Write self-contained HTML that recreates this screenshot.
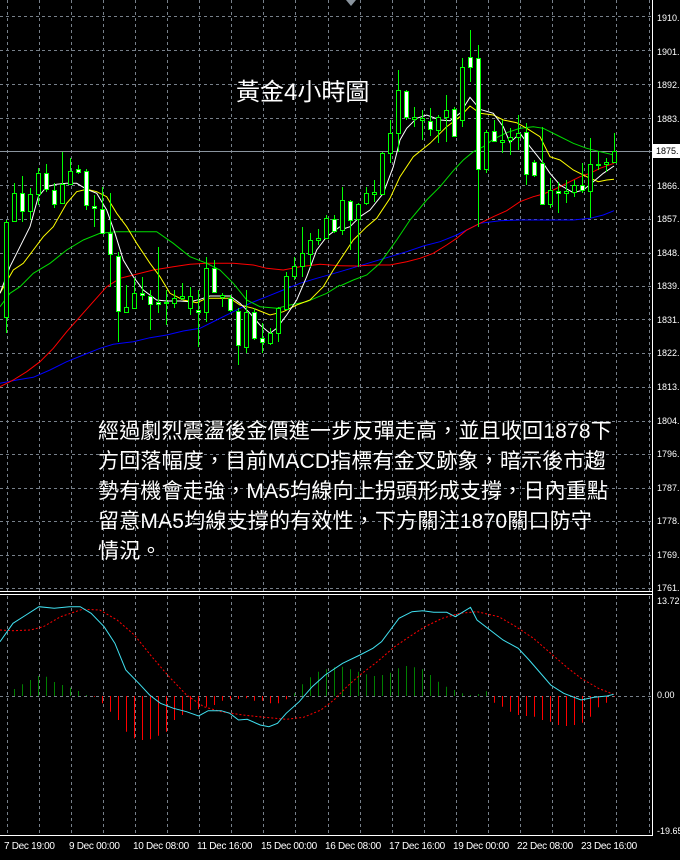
<!DOCTYPE html>
<html><head><meta charset="utf-8">
<style>
html,body{margin:0;padding:0;background:#000;}
#wrap{position:relative;width:680px;height:860px;overflow:hidden;background:#000;font-family:"Liberation Sans",sans-serif;}
svg{position:absolute;left:0;top:0;}
.lbl{position:absolute;left:657px;font-size:9px;color:#fff;line-height:10px;font-family:"Liberation Sans",sans-serif;}
.date{position:absolute;top:841px;font-size:10px;color:#fff;white-space:nowrap;letter-spacing:-0.3px;}
#title{position:absolute;left:236px;top:72px;font-size:24px;color:#fff;font-family:"Liberation Sans","Noto Sans CJK TC",sans-serif;white-space:nowrap;}
#para{position:absolute;left:98px;top:417px;font-size:21px;line-height:30px;color:#fff;font-family:"Liberation Sans","Noto Sans CJK TC",sans-serif;white-space:nowrap;letter-spacing:0.2px;}
#box{position:absolute;left:653px;top:144px;width:27px;height:14px;background:#fff;color:#000;font-size:9px;line-height:14px;padding-left:3px;}
</style></head><body>
<div id="wrap">
<svg id="s" width="680" height="860" xmlns="http://www.w3.org/2000/svg"></svg>
<div id="title">黃金4小時圖</div>
<div id="para">經過劇烈震盪後金價進一步反彈走高，並且收回1878下<br>方回落幅度，目前MACD指標有金叉跡象，暗示後市趨<br>勢有機會走強，MA5均線向上拐頭形成支撐，日內重點<br>留意MA5均線支撐的有效性，下方關注1870關口防守<br>情況。</div>
<div class="lbl" style="top:13px">1910.</div>
<div class="lbl" style="top:47px">1901.</div>
<div class="lbl" style="top:80px">1892.</div>
<div class="lbl" style="top:114px">1883.</div>
<div id="box">1875.</div>
<div class="lbl" style="top:181px">1866.</div>
<div class="lbl" style="top:214px">1857.</div>
<div class="lbl" style="top:248px">1848.</div>
<div class="lbl" style="top:281px">1839.</div>
<div class="lbl" style="top:315px">1831.</div>
<div class="lbl" style="top:348px">1822.</div>
<div class="lbl" style="top:382px">1813.</div>
<div class="lbl" style="top:416px">1804.</div>
<div class="lbl" style="top:449px">1796.</div>
<div class="lbl" style="top:483px">1787.</div>
<div class="lbl" style="top:516px">1778.</div>
<div class="lbl" style="top:550px">1769.</div>
<div class="lbl" style="top:583px">1761.</div>
<div class="lbl" style="top:596px">13.72</div>
<div class="lbl" style="top:690px">0.00</div>
<div class="lbl" style="top:826px">-19.65</div>
<div class="date" style="left:4px">7 Dec 19:00</div>
<div class="date" style="left:69px">9 Dec 00:00</div>
<div class="date" style="left:133px">10 Dec 08:00</div>
<div class="date" style="left:197px">11 Dec 16:00</div>
<div class="date" style="left:261px">15 Dec 00:00</div>
<div class="date" style="left:325px">16 Dec 08:00</div>
<div class="date" style="left:389px">17 Dec 16:00</div>
<div class="date" style="left:453px">19 Dec 00:00</div>
<div class="date" style="left:517px">22 Dec 08:00</div>
<div class="date" style="left:581px">23 Dec 16:00</div>
</div>
<script>
var s=document.getElementById('s'),h='';
var G='#77808a';
for(var x=6.5;x<650;x+=32.1){var xx=Math.round(x)+0.5;h+='<line x1="'+xx+'" y1="0" x2="'+xx+'" y2="591" stroke="'+G+'" stroke-dasharray="3,3"/>';h+='<line x1="'+xx+'" y1="596" x2="'+xx+'" y2="835" stroke="'+G+'" stroke-dasharray="3,3"/>';}
var hy=[16.5,50.5,84.5,118.5,185.5,219.5,253.5,286.5,319.5,353.5,387.5,421.5,454.5,488.5,521.5,555.5,588.5];
hy.forEach(function(y){h+='<line x1="0" y1="'+y+'" x2="652" y2="'+y+'" stroke="'+G+'" stroke-dasharray="3,3"/>';});
h+='<line x1="0" y1="151.5" x2="652" y2="151.5" stroke="#8a949e"/>';
h+='<line x1="0" y1="696.5" x2="652" y2="696.5" stroke="'+G+'" stroke-dasharray="3,3"/>';
h+='<line x1="652.5" y1="0" x2="652.5" y2="835" stroke="#fff"/>';
h+='<line x1="0" y1="591.5" x2="652" y2="591.5" stroke="#fff"/>';
h+='<line x1="0" y1="594.5" x2="652" y2="594.5" stroke="#fff"/>';
h+='<line x1="0" y1="835.5" x2="653" y2="835.5" stroke="#fff"/>';
h+='<polygon points="346,0 356,0 351,6" fill="#8a949e"/>';
function pl(pts,ox,c,sx,sy,oy,extra){var a=[];for(var i=0;i<pts.length;i+=2)a.push((pts[i]/sx+ox).toFixed(1)+','+(pts[i+1]/sy+oy).toFixed(1));return '<polyline points="'+a.join(' ')+'" fill="none" stroke="'+c+'" stroke-width="1" '+(extra||'')+'/>';}
var L={
blue:[[0,1150,50,1140,100,1132,150,1110,200,1085,250,1065,300,1045,340,1033,400,1025,450,1013,500,1005,550,993,600,985,650,960,700,935,750,910,800,890,850,870,900,850,950,835,1020,815],[0,815,50,800,100,785,150,770,200,755,250,738,300,725,350,705,390,685,420,670,480,662,540,660,600,660,700,660,750,655,790,645,822,632]],
red:[[0,1160,40,1140,80,1115,120,1085,160,1045,200,995,240,950,280,905,320,860,360,835,400,825,460,810,520,800,570,793,620,790,700,790,760,795,800,805,850,810,900,800,960,793,1020,797],[0,797,50,798,100,795,150,795,200,785,240,775,280,760,320,735,350,715,380,690,420,670,460,650,500,632,540,605,580,590,610,582,640,570,680,550,720,530,750,520,780,505,822,490]],
'#00e000':[[0,920,30,880,60,860,100,820,150,790,200,750,250,720,300,700,350,695,400,695,470,695,520,730,570,770,620,790,660,810,700,850,740,900,780,920,830,925,870,915,920,905,980,880,1020,855],[0,858,40,840,80,825,120,790,170,720,210,660,260,600,300,560,340,512,370,480,400,455,430,440,460,418,500,398,540,385,580,380,610,385,650,405,700,430,740,445,780,455,822,465]],
yellow:[[0,880,40,810,70,790,100,750,130,710,160,680,200,610,230,575,260,568,290,575,320,590,350,640,380,680,410,730,450,790,480,830,510,880,550,900,590,908,620,895,690,895,720,915,760,925,810,945,850,935,890,915,930,900,970,860,1000,810,1020,780],[0,780,40,720,80,680,110,655,150,595,180,530,220,470,270,430,320,380,360,350,390,318,420,340,460,345,490,360,530,368,560,385,600,410,630,470,660,480,700,510,740,530,775,545,800,540,822,538]],
white:[[0,880,30,800,60,740,90,680,115,590,140,560,170,553,200,550,230,550,260,568,290,580,320,630,345,700,370,780,400,830,430,870,470,900,500,903,540,903,570,905,600,898,630,888,690,888,720,910,750,940,780,975,810,1000,830,985,860,945,890,900,920,830,950,750,980,710,1020,680],[0,690,30,680,60,650,90,630,130,580,160,500,180,420,200,385,230,355,260,345,300,360,330,362,360,340,390,292,420,328,460,340,490,380,510,428,540,400,570,440,610,490,630,520,660,555,700,578,730,570,760,545,790,520,822,498]]
};
var clr={blue:'#0000ff',red:'#ff0000','#00e000':'#00dd00',yellow:'#ffff00',white:'#ffffff'};
var C=[[665,950,660,1000,0],[578,662,548,665,0],[578,632,528,665,1],[583,632,565,660,0],[518,582,505,615,0],[520,568,492,575,1],[570,612,548,625,1],[553,610,455,612,0],[512,552,475,555,0],[508,515,495,522,1],[512,615,508,630,1],[617,625,585,680,1],[628,698,560,700,1],[700,762,580,860,1],[768,932,755,1025,1],[922,935,855,940,0],[880,925,835,925,0],[878,885,830,900,1],[888,912,870,990,1],[907,912,740,940,1],[905,910,870,975,0],[895,910,870,925,0],[888,893,850,900,0],[888,925,860,945,0],[929,935,870,1040,1],[805,937,770,965,0],[805,875,780,880,1],[884,890,880,920,0],[893,930,885,935,1],[932,1035,925,1095,1],[935,1040,870,1060,0],[935,1015,925,1020,1],[1013,1025,970,1060,1],[1000,1028,985,1035,0],[925,1000,920,1025,0],[828,928,815,930,0],[798,828,770,840,0],[760,798,680,830,0],[720,762,700,800,0],[714,720,688,735,0],[655,715,645,718,0],[658,692,645,700,1],
[600,690,560,705,0],[603,660,600,750,1],[612,658,610,800,0],[578,610,560,615,0],[576,581,540,605,0],[458,582,455,585,0],[400,458,360,490,0],[270,400,210,455,0],[272,352,270,360,1],[352,358,320,380,0],[354,359,330,420,0],[362,388,325,408,1],[350,390,345,430,0],[330,352,285,425,0],[328,408,320,410,1],[202,360,175,380,0],[172,202,90,245,1],[175,508,135,680,1],[395,508,390,520,0],[392,422,360,425,1],[419,425,360,460,0],[410,420,385,465,0],[398,412,345,450,0],[395,522,370,555,1],[485,525,480,530,1],[488,612,380,615,1],[570,612,535,625,0],[574,579,545,640,1],[572,578,540,610,0],[555,575,540,590,0],[555,570,490,580,1],[492,572,415,655,0],[491,496,455,510,0],[485,492,475,515,0],[452,485,398,490,0]];
['blue','red','#00e000','yellow','white'].forEach(function(k){h+=pl(L[k][0],0,clr[k],3,3,0);h+=pl(L[k][1],340,clr[k],3,3,0);});
C.forEach(function(c,i){var x=6+8*i+0.5;var bt=Math.round(c[0]/3),bb=Math.round(c[1]/3),wt=Math.round(c[2]/3),wb=Math.round(c[3]/3);
h+='<line x1="'+x+'" y1="'+wt+'" x2="'+x+'" y2="'+wb+'" stroke="#00ff00"/>';
var hh=Math.max(bb-bt,1);
h+='<rect x="'+(x-2)+'" y="'+(bt+0.5)+'" width="4" height="'+hh+'" fill="'+(c[4]?'#fff':'#000')+'" stroke="#00ff00"/>';});
var HB=[347,327,313,300,288,290,306,315,323,333,345,350,370,395,420,455,475,480,478,467,455,420,405,390,388,380,375,362,358,357,355,362,362,370,370,358,340,313,292,275,268,262,260,268,275,283,288,285,278,265,258,262,268,285,305,320,330,340,345,342,334,368,380,395,405,408,410,420,425,435,438,435,428,410,382,368,350];
HB.forEach(function(v,i){var x=6+8*i+0.5;var y=v/3+580;var z=696;if(Math.abs(y-z)<0.5)return;h+='<line x1="'+x+'" y1="'+z+'" x2="'+x+'" y2="'+y.toFixed(1)+'" stroke="'+(y<z?'#008000':'#ff0000')+'"/>';});
var sig=[0,150,30,152,70,150,100,140,140,110,190,88,230,90,270,120,310,165,350,230,390,290,430,345,470,380,510,395,560,405,610,412,660,418,700,412,740,390,770,360,800,320,830,285,870,245,910,200,950,165,980,140,1020,115,1060,100,1100,95,1150,110,1190,140,1230,175,1270,220,1310,265,1340,295,1380,325,1415,343];
var mac=[0,185,30,130,60,105,90,80,125,85,160,80,185,80,210,100,240,140,265,190,290,270,320,310,345,345,370,370,400,385,430,395,458,408,480,392,510,392,530,400,550,420,570,418,600,435,620,440,640,430,660,400,690,365,720,320,750,285,790,250,830,225,860,205,880,185,900,150,920,115,950,95,975,92,1000,97,1030,97,1050,110,1085,82,1100,120,1130,150,1160,180,1195,205,1220,240,1250,285,1270,315,1300,340,1340,360,1370,352,1400,348,1415,343];
h+=pl(sig,0,'#ff0000',2.306,3,580,'stroke-dasharray="2,2"');
h+=pl(mac,0,'#40e0f0',2.306,3,580);
s.innerHTML=h;
</script>
</body></html>
